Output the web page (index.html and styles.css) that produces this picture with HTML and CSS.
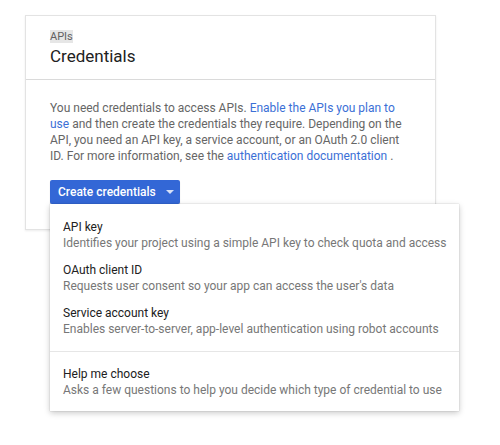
FILE: index.html
```html
<!DOCTYPE html>
<html>
<head>
<meta charset="utf-8">
<link rel="stylesheet" href="styles.css">
</head>
<body>
<div class="card">
  <div class="card-head">
    <span class="crumb">APIs</span>
    <h1 class="title">Credentials</h1>
  </div>
  <div class="card-body">
    <p class="intro">You need credentials to access APIs. <a href="#" class="link">Enable the APIs you plan to use</a> and then create the credentials they require. Depending on the API, you need an API key, a service account, or an OAuth 2.0 client ID. For more information, see the <a href="#" class="link">authentication documentation</a> .</p>
    <div class="dropdown">
      <button class="btn">Create credentials <span class="caret"></span></button>
      <div class="menu">
        <div class="item">
          <div class="item-title">API key</div>
          <div class="item-desc">Identifies your project using a simple API key to check quota and access</div>
        </div>
        <div class="item">
          <div class="item-title">OAuth client ID</div>
          <div class="item-desc">Requests user consent so your app can access the user's data</div>
        </div>
        <div class="item">
          <div class="item-title">Service account key</div>
          <div class="item-desc">Enables server-to-server, app-level authentication using robot accounts</div>
        </div>
        <div class="sep"></div>
        <div class="item">
          <div class="item-title">Help me choose</div>
          <div class="item-desc">Asks a few questions to help you decide which type of credential to use</div>
        </div>
      </div>
    </div>
  </div>
</div>
</body>
</html>
```
FILE: styles.css
```css
html, body {
  margin: 0;
  padding: 0;
  background: #fff;
}
body {
  font-family: Roboto, "Liberation Sans", Arial, sans-serif;
  padding: 15px 0 0 25px;
  min-height: 445px;
  box-sizing: border-box;
}
.card {
  width: 411px;
  border: 1px solid #e3e3e3;
  box-shadow: 0 1px 2px rgba(0,0,0,0.08);
  box-sizing: border-box;
}
.card-head {
  padding: 14px 24px 13px;
  border-bottom: 1px solid #dadada;
  display: flex;
  flex-direction: column;
  align-items: flex-start;
}
.crumb {
  font-size: 11px;
  line-height: 13px;
  color: #616161;
  background: #e6e6e6;
  margin-bottom: 3px;
}
.title {
  margin: 0;
  font-size: 17px;
  line-height: 20px;
  font-weight: 400;
  color: #212121;
}
.card-body {
  padding: 20px 24px 25px;
}
.intro {
  margin: 0 0 16px;
  font-size: 12px;
  line-height: 16px;
  color: #666;
}
.link {
  color: #3b6fd6;
  text-decoration: none;
}
.dropdown {
  position: relative;
  display: inline-block;
}
.btn {
  display: flex;
  align-items: center;
  height: 24px;
  width: 130px;
  padding: 0 0 0 8px;
  border: none;
  border-radius: 2px;
  background: #3367d6;
  color: #fff;
  font-family: inherit;
  font-size: 12px;
  font-weight: 500;
  box-shadow: 0 1px 1px rgba(0,0,0,0.2);
}
.caret {
  width: 0;
  height: 0;
  border-left: 4px solid transparent;
  border-right: 4px solid transparent;
  border-top: 4px solid rgba(255,255,255,0.8);
  margin-left: 10px;
}
.menu {
  position: absolute;
  top: 24px;
  left: 0;
  width: 409px;
  background: #fff;
  padding: 9px 0 8px;
  box-sizing: border-box;
  box-shadow: 0 2px 6px rgba(0,0,0,0.22), 0 0 1px rgba(0,0,0,0.25);
  z-index: 2;
}
.item {
  padding: 6px 8px 5px 13px;
}
.item-title {
  font-size: 12px;
  line-height: 16px;
  color: #212121;
}
.item-desc {
  font-size: 12px;
  line-height: 16px;
  color: #777;
  white-space: nowrap;
}
.sep {
  height: 1px;
  background: #e6e6e6;
  margin: 9px 0 8px;
}
```
